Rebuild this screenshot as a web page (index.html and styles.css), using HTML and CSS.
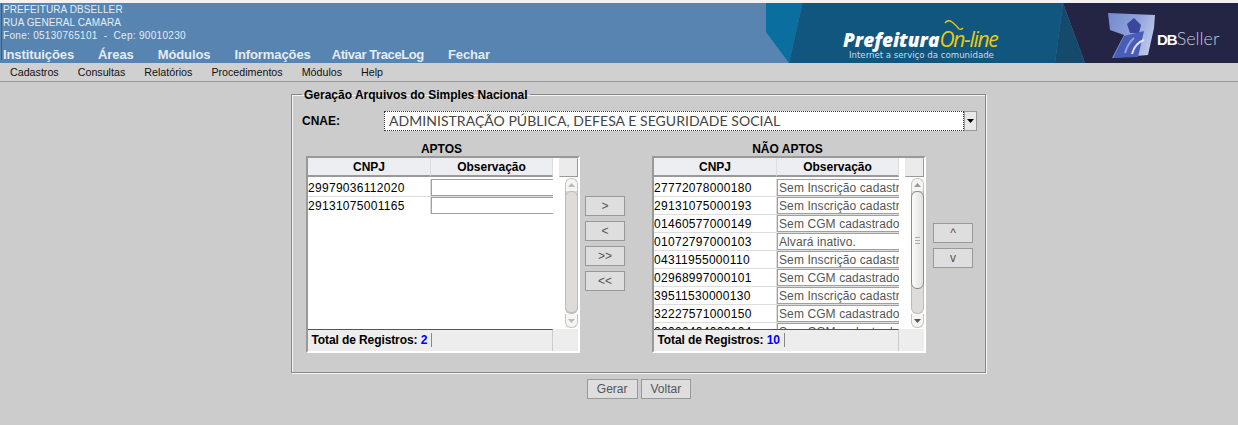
FILE: index.html
```html
<!DOCTYPE html>
<html lang="pt-BR">
<head>
    <meta charset="UTF-8">
    <title>Geração Arquivos do Simples Nacional</title>
    <link rel="stylesheet" href="styles.css">
</head>
<body>
    <div class="topo">
        <div class="topo-esq">
            <div class="topo-dados">
                <div>PREFEITURA DBSELLER</div>
                <div>RUA GENERAL CAMARA</div>
                <div class="fone">Fone: 05130765101 &nbsp;-&nbsp; Cep: 90010230</div>
            </div>
            <div class="topo-menu">
                <span>Instituições</span>
                <span>Áreas</span>
                <span>Módulos</span>
                <span class="curto">Informações</span>
                <span class="ativar">Ativar TraceLog</span>
                <span>Fechar</span>
            </div>
        </div>
        <div class="topo-banner">
            <svg class="banner-fundo" width="472" height="60" viewBox="0 0 472 60">
                <defs>
                    <linearGradient id="cubo" x1="0" y1="0" x2="1" y2="0.4">
                        <stop offset="0" stop-color="#7389cc"/>
                        <stop offset="0.6" stop-color="#8fa3da"/>
                        <stop offset="1" stop-color="#b9c5e8"/>
                    </linearGradient>
                    <filter id="suave"><feGaussianBlur stdDeviation="0.6"/></filter>
                </defs>
                <polygon points="0,0 36.6,0 23,60 0,29" fill="#0a6f9e"/>
                <polygon points="36.6,0 297,0 289,60 23,60" fill="#11567f"/>
                <polygon points="297,0 472,0 472,60 319,60" fill="#242444"/>
                <polygon points="297,0 319,60 289,60" fill="#164a6c"/>
                <g filter="url(#suave)">
                    <polygon points="342,10 389,12 388,25 382,52 346,55 358,32 344,27" fill="url(#cubo)"/>
                    <polygon points="361,21 368,15 375,22 373,30 364,30" fill="#3b479f"/>
                    <polygon points="358,33 378,28 372,54 347,55" fill="#4a5cb8"/>
                    <path d="M366 51 Q 369 40 378 37" fill="none" stroke="#dfe6f7" stroke-width="2"/>
                    <path d="M359 50 Q 362 40 368 35" fill="none" stroke="#8fa3da" stroke-width="2"/>
                </g>
                <path d="M179 20 Q182 16 186 19 T193 26 Q195 27 197 25" fill="none" stroke="#e8cc10" stroke-width="1.3"/>
            </svg>
            <div class="logo-pref">
                <div class="logo-linha"><b>Prefeitura</b><i>On-line</i></div>
                <div class="logo-sub">Internet a serviço da comunidade</div>
            </div>
            <div class="logo-db"><b>DB</b><span>Seller</span></div>
        </div>
    </div>

    <div class="menu">
        <span>Cadastros</span>
        <span>Consultas</span>
        <span>Relatórios</span>
        <span>Procedimentos</span>
        <span>Módulos</span>
        <span>Help</span>
    </div>

    <div class="conteudo">
        <fieldset class="quadro">
            <legend>Geração Arquivos do Simples Nacional</legend>

            <div class="cnae">
                <label>CNAE:</label>
                <div class="combo">
                    <span class="combo-valor">ADMINISTRAÇÃO PÚBLICA, DEFESA E SEGURIDADE SOCIAL</span>
                    <span class="combo-seta"><svg width="7" height="4" viewBox="0 0 7 4"><polygon points="0,0 7,0 3.5,4" fill="#000"/></svg></span>
                </div>
            </div>

            <div class="listas">
                <div class="lista">
                    <div class="lista-titulo">APTOS</div>
                    <div class="grid">
                        <div class="grid-cab">
                            <span class="cab-cnpj">CNPJ</span>
                            <span class="cab-obs">Observação</span>
                            <span class="cab-canto"></span>
                        </div>
                        <div class="grid-corpo">
                            <div class="linhas">
                                <div class="linha"><span class="cnpj">29979036112020</span><span class="obs"></span></div>
                                <div class="linha"><span class="cnpj">29131075001165</span><span class="obs"></span></div>
                            </div>
                            <div class="barra">
                                <span class="barra-seta"><svg width="7" height="4" viewBox="0 0 7 4"><polygon points="0,4 7,4 3.5,0" fill="#bbb"/></svg></span>
                                <span class="barra-trilho"><span class="barra-cursor cheio"></span></span>
                                <span class="barra-seta baixo"><svg width="7" height="4" viewBox="0 0 7 4"><polygon points="0,0 7,0 3.5,4" fill="#bbb"/></svg></span>
                            </div>
                        </div>
                        <div class="grid-rodape">
                            <div class="total">Total de Registros: <b>2</b><i></i></div>
                            <div class="rodape-canto"></div>
                        </div>
                    </div>
                </div>

                <div class="botoes-meio">
                    <button>&gt;</button>
                    <button>&lt;</button>
                    <button>&gt;&gt;</button>
                    <button>&lt;&lt;</button>
                </div>

                <div class="lista">
                    <div class="lista-titulo">NÃO APTOS</div>
                    <div class="grid">
                        <div class="grid-cab">
                            <span class="cab-cnpj">CNPJ</span>
                            <span class="cab-obs">Observação</span>
                            <span class="cab-canto"></span>
                        </div>
                        <div class="grid-corpo">
                            <div class="linhas">
                                <div class="linha"><span class="cnpj">27772078000180</span><span class="obs">Sem Inscrição cadastrada</span></div>
                                <div class="linha"><span class="cnpj">29131075000193</span><span class="obs">Sem Inscrição cadastrada</span></div>
                                <div class="linha"><span class="cnpj">01460577000149</span><span class="obs">Sem CGM cadastrado</span></div>
                                <div class="linha"><span class="cnpj">01072797000103</span><span class="obs">Alvará inativo.</span></div>
                                <div class="linha"><span class="cnpj">04311955000110</span><span class="obs">Sem Inscrição cadastrada</span></div>
                                <div class="linha"><span class="cnpj">02968997000101</span><span class="obs">Sem CGM cadastrado</span></div>
                                <div class="linha"><span class="cnpj">39511530000130</span><span class="obs">Sem Inscrição cadastrada</span></div>
                                <div class="linha"><span class="cnpj">32227571000150</span><span class="obs">Sem CGM cadastrado</span></div>
                                <div class="linha"><span class="cnpj">00000404000104</span><span class="obs">Sem CGM cadastrado</span></div>
                            </div>
                            <div class="barra">
                                <span class="barra-seta"><svg width="7" height="4" viewBox="0 0 7 4"><polygon points="0,4 7,4 3.5,0" fill="#999"/></svg></span>
                                <span class="barra-trilho"><span class="barra-cursor"><span class="pega"></span></span></span>
                                <span class="barra-seta baixo"><svg width="7" height="4" viewBox="0 0 7 4"><polygon points="0,0 7,0 3.5,4" fill="#555"/></svg></span>
                            </div>
                        </div>
                        <div class="grid-rodape">
                            <div class="total">Total de Registros: <b>10</b><i></i></div>
                            <div class="rodape-canto"></div>
                        </div>
                    </div>
                </div>

                <div class="botoes-ordem">
                    <button>^</button>
                    <button>v</button>
                </div>
            </div>
        </fieldset>

        <div class="acoes">
            <button>Gerar</button>
            <button>Voltar</button>
        </div>
    </div>
</body>
</html>
```

FILE: styles.css
```css
html, body {
    margin: 0;
    padding: 0;
}

body {
    width: 1238px;
    height: 425px;
    overflow: hidden;
    background-color: #cccccc;
    font-family: "Liberation Sans", Arial, sans-serif;
    font-size: 12px;
    color: #000;
}

.topo {
    display: flex;
    height: 60px;
    border-top: 3px solid #f2f2f2;
    background-color: #5784b1;
}

.topo-esq {
    box-sizing: border-box;
    flex: none;
    width: 766px;
    padding-left: 3px;
    background: linear-gradient(#555, #555) 1px 0 / 1px 57px no-repeat;
    color: #e4ecf4;
}

.topo-dados {
    height: 44px;
    font-size: 10px;
    line-height: 13px;
    letter-spacing: 0.1px;
}

.fone {
    letter-spacing: 0.3px;
}

.topo-menu {
    display: flex;
    font-size: 13px;
    font-weight: bold;
    line-height: 16px;
    letter-spacing: -0.1px;
}

.topo-menu span {
    margin-right: 24px;
}

.topo-menu .curto {
    margin-right: 21px;
}

.topo-menu .ativar {
    letter-spacing: -0.4px;
}

.topo-banner {
    position: relative;
    flex: none;
    width: 472px;
    height: 60px;
    overflow: hidden;
}

.banner-fundo {
    display: block;
}

.logo-pref {
    position: absolute;
    left: 77px;
    top: 24px;
}

.logo-linha {
    font-family: "Open Sans", sans-serif;
    font-size: 19px;
    line-height: 24px;
    font-style: italic;
    white-space: nowrap;
}

.logo-linha b {
    color: #fff;
    font-weight: 800;
}

.logo-linha i {
    color: #e8cc10;
    font-size: 21px;
    font-weight: 400;
    letter-spacing: -1.3px;
}

.logo-sub {
    margin-left: 6px;
    margin-top: -2px;
    font-family: "DejaVu Sans", sans-serif;
    font-size: 8.6px;
    line-height: 11px;
    color: #cfdbe6;
    white-space: nowrap;
}

.logo-db {
    position: absolute;
    left: 391px;
    top: 25px;
    font-size: 15px;
    line-height: 20px;
    color: #c5c9d6;
}

.logo-db b {
    color: #fff;
    letter-spacing: -1px;
}

.logo-db span {
    font-family: Lato, sans-serif;
    font-size: 18px;
    font-weight: 300;
}

.menu {
    display: flex;
    height: 18px;
    padding-left: 10px;
    border-bottom: 1px solid #999;
    background-color: #d0d0d0;
    font-size: 10.7px;
    line-height: 18px;
    color: #111;
}

.menu span {
    margin-right: 19px;
}

.conteudo {
    display: flex;
    flex-direction: column;
    align-items: center;
    padding-left: 40px;
}

.quadro {
    box-sizing: border-box;
    width: 695px;
    height: 287px;
    margin: 4px 0 0 -1px;
    padding: 0 8px 0 10px;
    border: 1px solid #888;
    box-shadow: 1px 1px 0 #f4f4f4, inset 1px 1px 0 #f4f4f4;
}

.quadro legend {
    padding: 2px 2px 0;
    font-size: 12px;
    font-weight: bold;
    line-height: 14px;
}

.cnae {
    display: flex;
    align-items: center;
    height: 20px;
    margin-top: 9px;
}

.cnae label {
    width: 82px;
    font-weight: bold;
}

.combo {
    display: flex;
    width: 593px;
    height: 20px;
}

.combo-valor {
    flex: 1;
    padding-left: 5px;
    background-color: #fff;
    outline: 1px dotted #333;
    outline-offset: -1px;
    font-family: Lato, sans-serif;
    font-size: 14px;
    line-height: 20px;
    letter-spacing: 0.04px;
    color: #444;
}

.combo-seta {
    display: flex;
    align-items: center;
    justify-content: center;
    box-sizing: border-box;
    width: 13px;
    background-color: #e8e8e8;
    border: 1px solid #999;
}

.listas {
    display: flex;
    margin-top: 10px;
    margin-left: 4px;
}

.lista-titulo {
    height: 15px;
    padding-right: 3px;
    font-weight: bold;
    line-height: 16px;
    text-align: center;
}

.grid {
    box-sizing: border-box;
    width: 274px;
    height: 197px;
    border: 2px solid #999;
    border-right-color: #fff;
    border-bottom-color: #fff;
    background-color: #fff;
}

.grid-cab {
    display: flex;
    height: 20px;
    font-weight: bold;
    line-height: 18px;
    text-align: center;
}

.cab-cnpj,
.cab-obs {
    box-sizing: border-box;
    height: 19px;
    background-color: #eceef2;
    border-right: 1px solid #ddd;
    border-bottom: 2px solid #999;
}

.cab-cnpj {
    width: 123px;
}

.cab-obs {
    width: 122px;
}

.cab-canto {
    box-sizing: border-box;
    width: 19px;
    height: 19px;
    margin-left: 6px;
    border: 1px solid #999;
    border-top-color: #e8e8e8;
    border-left-color: #e8e8e8;
    background-color: #ebebeb;
}

.grid-corpo {
    display: flex;
    height: 151px;
    overflow: hidden;
}

.linhas {
    width: 245px;
    height: 151px;
    overflow: hidden;
}

.linha {
    display: flex;
    box-sizing: border-box;
    height: 18px;
    border-top: 1px solid #ddd;
    line-height: 19px;
}

.linha:first-child {
    border-top-color: #fff;
}

.cnpj {
    width: 122px;
    border-right: 1px solid #ddd;
    letter-spacing: 0.3px;
}

.obs {
    box-sizing: border-box;
    width: 122px;
    height: 17px;
    padding-left: 1px;
    border: 1px solid #a0a0a0;
    border-right: 0;
    color: #555;
    background-color: #fff;
    line-height: 17px;
    letter-spacing: 0.1px;
    white-space: nowrap;
    overflow: hidden;
}

.barra {
    display: flex;
    flex-direction: column;
    width: 13px;
    height: 150px;
    margin-left: 12px;
}

.barra-seta {
    display: flex;
    flex: none;
    align-items: center;
    justify-content: center;
    box-sizing: border-box;
    height: 13px;
    border: 1px solid #c4c4c4;
    border-bottom: 0;
    border-radius: 6px 6px 0 0;
    background-color: #f6f5f4;
}

.barra-seta.baixo {
    height: 14px;
    border: 1px solid #c4c4c4;
    border-top: 0;
    border-radius: 0 0 6px 6px;
}

.barra-trilho {
    flex: 1;
    display: block;
    box-sizing: border-box;
    border: 1px solid #bbb;
    border-top: 0;
    border-radius: 0 0 6px 6px;
    background-color: #dedcda;
}

.barra-cursor {
    display: flex;
    align-items: center;
    justify-content: center;
    box-sizing: border-box;
    height: 98px;
    margin: 0 -1px;
    border: 1px solid #8c8c8c;
    border-radius: 6px;
    background: linear-gradient(to right, #fbfbfb, #e2e1df);
}

.barra-cursor.cheio {
    height: 100%;
    border-color: #bbb;
    background: #dedcda;
}

.pega {
    width: 5px;
    height: 7px;
    background: repeating-linear-gradient(#aaa 0, #aaa 1px, transparent 1px, transparent 3px);
}

.grid-rodape {
    display: flex;
    height: 22px;
}

.total {
    box-sizing: border-box;
    width: 245px;
    padding-left: 3.5px;
    border-top: 1px solid #555;
    border-right: 1px solid #ccc;
    background-color: #ededed;
    font-weight: bold;
    line-height: 21px;
    letter-spacing: -0.1px;
}

.total b {
    color: #00f;
}

.total i {
    display: inline-block;
    width: 1px;
    height: 14px;
    margin-left: 4px;
    vertical-align: -3px;
    background-color: #888;
}

.rodape-canto {
    width: 25px;
    background-color: #ededed;
}

.botoes-meio,
.botoes-ordem {
    display: flex;
    flex-direction: column;
    gap: 5px;
}

.botoes-meio {
    margin: 55px 27px 0 5px;
}

.botoes-ordem {
    margin: 82px 0 0 7px;
}

button {
    box-sizing: border-box;
    width: 40px;
    height: 20px;
    padding: 0;
    border: 1px solid #999;
    border-radius: 0;
    background-color: #dedede;
    color: #555;
    font-family: "Liberation Sans", Arial, sans-serif;
    font-size: 12px;
}

.acoes {
    display: flex;
    gap: 3px;
    margin-top: 6px;
}

.acoes button {
    width: auto;
    padding: 0 9px;
}
```
